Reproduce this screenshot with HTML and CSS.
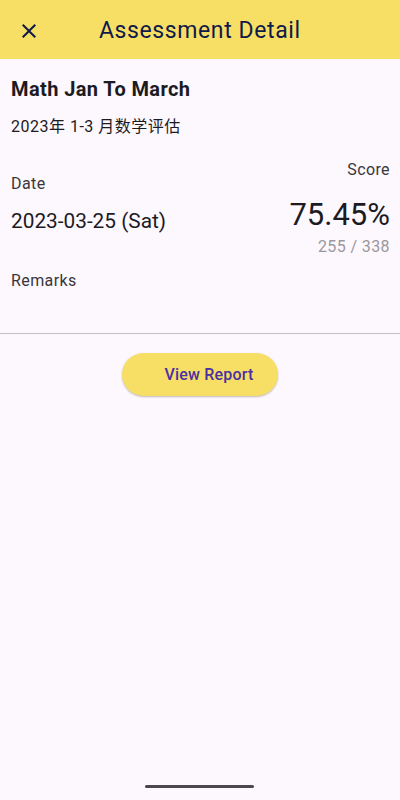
FILE: index.html
```html
<!DOCTYPE html>
<html lang="en">
<head>
  <meta charset="UTF-8" />
  <meta name="viewport" content="width=device-width, initial-scale=1.0"/>
  <title>Assessment Detail</title>
  <link rel="stylesheet" href="styles.css">
</head>
<body>

<header class="app-bar">
  <button class="close-btn" aria-label="Close">
    <svg width="24" height="24" viewBox="0 0 24 24">
      <path d="M19 6.41L17.59 5 12 10.59 6.41 5 5 6.41 10.59 12 5 17.59 6.41 19 12 13.41 17.59 19 19 17.59 13.41 12z" fill="#0f1a4a"/>
    </svg>
  </button>
  <h1>Assessment Detail</h1>
</header>

<main>
  <section class="detail">
    <h2 class="title">Math Jan To March</h2>
    <p class="subtitle">2023年 1-3 月数学评估</p>

    <div class="info-row">
      <div class="date-col">
        <span class="label">Date</span>
        <span class="date">2023-03-25 (Sat)</span>
      </div>
      <div class="score-col">
        <span class="label">Score</span>
        <span class="percent">75.45%</span>
        <span class="marks">255 / 338</span>
      </div>
    </div>

    <p class="label remarks">Remarks</p>
  </section>

  <hr class="divider">

  <div class="actions">
    <button class="report-btn">View Report</button>
  </div>
</main>

<div class="home-bar"></div>

</body>
</html>
```

FILE: styles.css
```css
body {
  font-family: Roboto, "Noto Sans CJK SC", sans-serif;
  background: #fdf7fe;
  margin: 0;
  padding: 0;
  height: 800px;
  position: relative;
  color: #1c1b1f;
}
.app-bar {
  background: #f7df66;
  height: 59px;
  display: flex;
  align-items: center;
}
.close-btn {
  background: none;
  border: none;
  padding: 0;
  margin: 2px 0 0 17px;
  width: 24px;
  height: 24px;
  display: flex;
}
.app-bar h1 {
  margin: 2px 0 0 58px;
  font-size: 23px;
  font-weight: 400;
  color: #0f1a4a;
  letter-spacing: 0.6px;
}
.detail {
  padding: 18px 11px 0;
}
.title {
  margin: 0;
  font-size: 20px;
  font-weight: 700;
  line-height: 24px;
  letter-spacing: 0.4px;
}
.subtitle {
  margin: 16px 0 0;
  font-size: 16px;
  line-height: 20px;
  letter-spacing: 0.5px;
}
.info-row {
  display: flex;
  justify-content: space-between;
  margin-top: 23px;
}
.date-col {
  display: flex;
  flex-direction: column;
  padding-top: 14px;
}
.score-col {
  display: flex;
  flex-direction: column;
  align-items: flex-end;
  margin-right: -1px;
}
.label {
  font-size: 16px;
  line-height: 20px;
  letter-spacing: 0.4px;
  color: #38363b;
}
.date {
  margin-top: 14px;
  font-size: 20.8px;
  line-height: 26px;
}
.percent {
  margin-top: 17px;
  font-size: 31px;
  line-height: 36px;
}
.marks {
  margin-top: 4px;
  font-size: 16px;
  line-height: 20px;
  letter-spacing: 0.4px;
  color: #9a989c;
}
.remarks {
  margin: 14px 0 0;
}
.divider {
  border: none;
  border-top: 1px solid #c4c0c4;
  margin: 42px 0 0;
}
.actions {
  display: flex;
  justify-content: center;
  padding-top: 19px;
}
.report-btn {
  width: 156px;
  height: 43px;
  border: none;
  border-radius: 22px;
  background: #f7df66;
  color: #4b2fa3;
  font-family: Roboto, sans-serif;
  font-size: 16px;
  font-weight: 500;
  letter-spacing: 0.2px;
  padding: 0 0 0 18px;
  box-shadow: 0 1px 2px rgba(0,0,0,0.25);
}
.home-bar {
  position: absolute;
  left: 145px;
  bottom: 12px;
  width: 109px;
  height: 3px;
  border-radius: 2px;
  background: #4a474e;
}
```
